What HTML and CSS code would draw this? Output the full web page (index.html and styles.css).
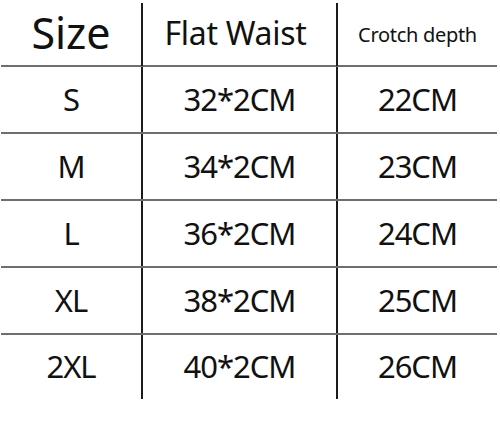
FILE: index.html
```html
<!DOCTYPE html>
<html>
<head>
<meta charset="utf-8">
<link rel="stylesheet" href="styles.css">
</head>
<body>
<div class="table">
  <div class="row head">
    <div class="cell c-size">Size</div>
    <div class="cell c-waist">Flat Waist</div>
    <div class="cell c-crotch">Crotch depth</div>
  </div>
  <div class="row">
    <div class="cell">S</div>
    <div class="cell">32*2CM</div>
    <div class="cell">22CM</div>
  </div>
  <div class="row">
    <div class="cell">M</div>
    <div class="cell">34*2CM</div>
    <div class="cell">23CM</div>
  </div>
  <div class="row">
    <div class="cell">L</div>
    <div class="cell">36*2CM</div>
    <div class="cell">24CM</div>
  </div>
  <div class="row">
    <div class="cell">XL</div>
    <div class="cell">38*2CM</div>
    <div class="cell">25CM</div>
  </div>
  <div class="row last">
    <div class="cell">2XL</div>
    <div class="cell">40*2CM</div>
    <div class="cell">26CM</div>
  </div>
</div>
</body>
</html>
```
FILE: styles.css
```css
html, body {
  margin: 0;
  padding: 0;
  background: #ffffff;
}
body {
  font-family: "Noto Sans", "Open Sans", sans-serif;
  color: #111111;
  width: 500px;
  height: 423px;
  overflow: hidden;
}
.table {
  margin: 3px 0 0 1px;
  width: 496px;
}
.row {
  display: grid;
  grid-template-columns: 140px 195px 1fr;
  height: 65px;
  border-bottom: 2px solid #6e6e6e;
}
.row.head {
  height: 62px;
}
.row.last {
  height: 64px;
  border-bottom: none;
}
.cell {
  display: flex;
  align-items: center;
  justify-content: center;
  font-size: 31px;
  letter-spacing: -1px;
  padding-bottom: 2px;
}
.cell + .cell {
  border-left: 2px solid #1c1c1c;
}
.c-size {
  font-size: 43px;
  letter-spacing: 0;
  padding-bottom: 4px;
}
.c-waist {
  font-size: 32px;
  letter-spacing: -0.3px;
  padding-bottom: 4px;
  padding-right: 8px;
}
.c-crotch {
  font-size: 20px;
  letter-spacing: -0.3px;
  padding-bottom: 0;
}
```
